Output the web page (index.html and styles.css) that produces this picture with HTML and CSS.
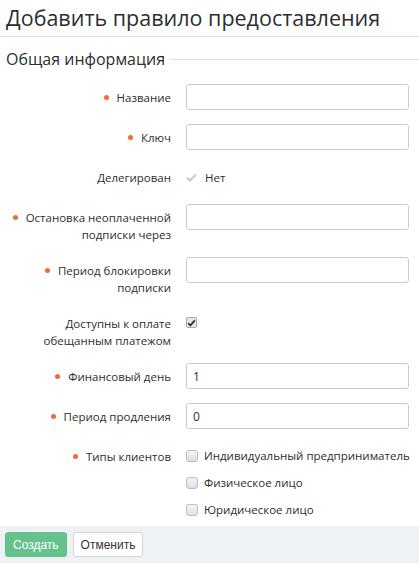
FILE: index.html
```html
<!DOCTYPE html>
<html lang="ru">
<head>
    <meta charset="UTF-8">
    <meta name="viewport" content="width=device-width, initial-scale=1.0">
    <title>Добавить правило предоставления</title>
    <link rel="stylesheet" href="styles.css">
</head>
<body>
    <h1 class="page-title">Добавить правило предоставления</h1>

    <form class="rule-form">
        <div class="section-title">Общая информация</div>

        <div class="form-row">
            <label class="label required">Название</label>
            <div class="field"><input type="text" class="input"></div>
        </div>

        <div class="form-row">
            <label class="label required">Ключ</label>
            <div class="field"><input type="text" class="input"></div>
        </div>

        <div class="form-row">
            <label class="label">Делегирован</label>
            <div class="field static">
                <svg class="tick" width="11" height="9" viewBox="0 0 11 9"><path d="M1 4.5 L4 7.5 L10 1.5" fill="none" stroke="#c5ccd3" stroke-width="2.2"/></svg>
                <span>Нет</span>
            </div>
        </div>

        <div class="form-row">
            <label class="label required">Остановка неоплаченной подписки через</label>
            <div class="field"><input type="text" class="input"></div>
        </div>

        <div class="form-row">
            <label class="label required">Период блокировки подписки</label>
            <div class="field"><input type="text" class="input"></div>
        </div>

        <div class="form-row">
            <label class="label">Доступны к оплате обещанным платежом</label>
            <div class="field check-field">
                <span class="checkbox checked">
                    <svg width="9" height="8" viewBox="0 0 9 8"><path d="M1.2 4.2 L3.4 6.4 L7.8 1.4" fill="none" stroke="#333" stroke-width="1.8"/></svg>
                </span>
            </div>
        </div>

        <div class="form-row">
            <label class="label required">Финансовый день</label>
            <div class="field"><input type="text" class="input" value="1"></div>
        </div>

        <div class="form-row">
            <label class="label required">Период продления</label>
            <div class="field"><input type="text" class="input" value="0"></div>
        </div>

        <div class="form-row">
            <label class="label required">Типы клиентов</label>
            <div class="field options">
                <div class="option"><span class="checkbox"></span>Индивидуальный предприниматель</div>
                <div class="option"><span class="checkbox"></span>Физическое лицо</div>
                <div class="option"><span class="checkbox"></span>Юридическое лицо</div>
            </div>
        </div>
    </form>

    <div class="actions">
        <button class="btn btn-primary">Создать</button>
        <button class="btn">Отменить</button>
    </div>
</body>
</html>
```

FILE: styles.css
```css
body {
    margin: 0;
    font-family: 'Open Sans', 'Noto Sans', sans-serif;
    color: #2e2e2e;
    background: #fff;
}
.page-title {
    margin: 0;
    padding: 3px 6px;
    font-size: 21.5px;
    font-weight: 400;
    line-height: 30px;
    border-bottom: 1px solid #d6dde5;
}
.rule-form {
    margin: 0;
    padding: 10px 0 8px;
}
.section-title {
    display: flex;
    align-items: center;
    padding-left: 6px;
    font-size: 16px;
    line-height: 24px;
    margin-bottom: 13px;
}
.section-title::after {
    content: "";
    flex: 1;
    height: 1px;
    margin-left: 5px;
    background: #d6dde5;
}
.form-row {
    display: grid;
    grid-template-columns: 171px 1fr;
    column-gap: 15px;
    padding-right: 10px;
    margin-bottom: 14px;
}
.form-row:last-child {
    margin-bottom: 0;
}
.label {
    text-align: right;
    font-size: 11.5px;
    line-height: 17px;
    padding-top: 5px;
}
.label.required::before {
    content: "";
    display: inline-block;
    width: 5px;
    height: 5px;
    border-radius: 50%;
    background: #f26a3a;
    margin-right: 8px;
    vertical-align: 2px;
}
.input {
    display: block;
    box-sizing: border-box;
    width: 100%;
    height: 26px;
    margin: 0;
    padding: 0 6px;
    border: 1px solid #c9cdd1;
    border-radius: 3px;
    font-family: inherit;
    font-size: 12px;
    color: #2e2e2e;
    outline: none;
}
.static {
    display: flex;
    align-items: center;
    font-size: 11.5px;
    height: 26px;
}
.tick {
    margin-right: 8px;
}
.check-field {
    display: flex;
    align-items: flex-start;
    padding-top: 7px;
}
.checkbox {
    display: inline-flex;
    flex: none;
    align-items: center;
    justify-content: center;
    box-sizing: border-box;
    width: 12px;
    height: 12px;
    border: 1px solid #b9bec3;
    border-radius: 3px;
    background: linear-gradient(#f6f6f6, #dedede);
}
.checkbox.checked {
    width: 11px;
    height: 11px;
    border-radius: 2px;
    background: #e6e6e6;
    border-color: #a9a9a9;
}
.options {
    padding-top: 4px;
}
.option {
    display: flex;
    align-items: center;
    font-size: 11.5px;
    line-height: 17px;
    white-space: nowrap;
    margin-bottom: 10px;
}
.option:last-child {
    margin-bottom: 0;
}
.option .checkbox {
    margin-right: 6px;
}
.actions {
    display: flex;
    gap: 6px;
    padding: 6px 5px;
    background: #eef2f5;
}
.btn {
    height: 25px;
    padding: 0 7px;
    font-family: 'Liberation Sans', Arial, sans-serif;
    font-size: 12px;
    color: #333;
    background: #fff;
    border: 1px solid #d2d6da;
    border-radius: 3px;
}
.btn-primary {
    color: #fff;
    background: #66c28c;
    border-color: #66c28c;
}
```
